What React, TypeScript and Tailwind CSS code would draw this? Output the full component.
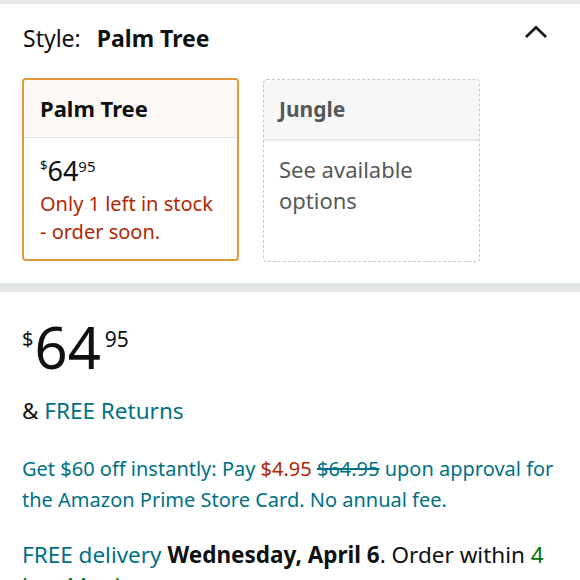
export default function App() {
  return (
    <div
      className="w-[580px] h-[580px] overflow-hidden bg-white text-[#0f1111]"
      style={{ fontFamily: '"Noto Sans", "Open Sans", Arial, sans-serif' }}
    >
      <div className="h-[4px] bg-[#e7e9e9]" />

      {/* style selector */}
      <div className="pl-[22px] pr-[23px] pt-[18px] pb-[21px]">
        <div className="flex items-start justify-between">
          <div className="pl-[1px] text-[23px] leading-[32px]">
            <span>Style:</span>
            <span className="ml-[16px] font-bold">Palm Tree</span>
          </div>
          <svg width="24" height="14" viewBox="0 0 24 14" className="mt-[3px] mr-[9px]">
            <path d="M2 12 L12 2.2 L22 12" fill="none" stroke="#0f1111" strokeWidth="2.6" />
          </svg>
        </div>

        <div className="mt-[24px] flex items-start gap-[24px]">
          <div className="w-[217px] h-[183px] rounded-[4px] border-2 border-[#e1993d] overflow-hidden">
            <div className="h-[58px] bg-[#fcf9f6] border-b border-[#e3e3e3] px-[16px] flex items-center">
              <span className="text-[22px] font-bold">Palm Tree</span>
            </div>
            <div className="px-[16px] pt-[19px]">
              <div className="flex items-start leading-none">
                <span className="text-[13px] mt-[2px]">$</span>
                <span className="text-[27px]">64</span>
                <span className="text-[15px] mt-[2px]">95</span>
              </div>
              <div className="mt-[6px] text-[20px] leading-[28px] text-[#b12704]">
                Only 1 left in stock
                <br />- order soon.
              </div>
            </div>
          </div>

          <div className="w-[217px] h-[183px] rounded-[4px] border border-dashed border-[#c9c9c9] overflow-hidden mt-[1px]">
            <div className="h-[61px] bg-[#f7f7f7] border-b-2 border-[#e7e7e7] px-[15px] flex items-center">
              <span className="text-[21px] font-bold text-[#565959]">Jungle</span>
            </div>
            <div className="px-[15px] pt-[13px] text-[22px] leading-[31px] text-[#565959]">
              See available
              <br />
              options
            </div>
          </div>
        </div>
      </div>

      <div className="h-[9px] bg-[#e3e6e6]" />

      {/* buy box */}
      <div className="px-[22px] pt-[26px]">
        <div className="flex items-start leading-none">
          <span className="text-[20px] mt-[11px]">$</span>
          <span className="text-[58px] leading-[58px] ml-[1px]">64</span>
          <span className="text-[21px] mt-[11px] ml-[4px]">95</span>
        </div>

        <div className="mt-[20px] text-[22.5px] leading-[30px]">
          &amp; <span className="text-[#007185]">FREE Returns</span>
        </div>

        <div className="mt-[27px] text-[20px] leading-[31px] text-[#007185]">
          Get $60 off instantly: Pay <span className="text-[#b12704]">$4.95</span>{" "}
          <span className="line-through">$64.95</span> upon approval for the Amazon Prime Store
          Card. No annual fee.
        </div>

        <div className="mt-[24px] text-[22.5px] leading-[31px]">
          <span className="text-[#007185]">FREE delivery</span>{" "}
          <span className="font-bold">Wednesday, April 6</span>. Order within{" "}
          <span className="text-[#007600]">4 hrs 44 mins</span>
        </div>
      </div>
    </div>
  );
}
